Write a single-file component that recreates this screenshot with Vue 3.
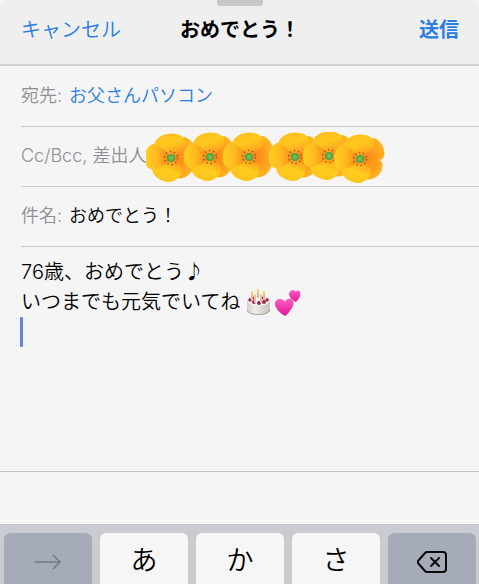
<script setup>
import { ref } from 'vue'

const to = ref('お父さんパソコン')
const subject = ref('おめでとう！')
const message = ref('76歳、おめでとう♪\nいつまでも元気でいてね')
const kana = ['あ', 'か', 'さ']
const flowers = [
  { x: 27, y: 26 },
  { x: 66, y: 25 },
  { x: 105, y: 25 },
  { x: 151, y: 25 },
  { x: 185, y: 24 },
  { x: 216, y: 27 }
]
const candles = [
  { x: 6, y: 6 },
  { x: 12, y: 4 },
  { x: 18, y: 6 },
  { x: 9, y: 9 },
  { x: 15, y: 9 }
]

function addKana(k) {
  message.value += k
}
function removeLast() {
  message.value = message.value.slice(0, -1)
}
</script>

<template>
  <div class="page">
    <form class="mail" @submit.prevent>
      <header class="bar">
        <span class="grabber"></span>
        <button type="button" class="cancel">キャンセル</button>
        <h1>{{ subject }}</h1>
        <button type="submit" class="send">送信</button>
      </header>

      <div class="fields">
        <div class="field">
          <label for="to">宛先:</label>
          <input id="to" v-model="to" type="text" class="address">
        </div>
        <div class="field">
          <button type="button" class="cc">Cc/Bcc, 差出人</button>
          <svg class="flowers" width="242" height="52" viewBox="2 0 242 52" aria-hidden="true">
            <defs>
              <linearGradient id="petal-top" x1="0" y1="0" x2="0.4" y2="1">
                <stop offset="0" stop-color="#ffbc20" />
                <stop offset="0.5" stop-color="#ffc81e" />
                <stop offset="0.8" stop-color="#ffab20" />
                <stop offset="1" stop-color="#fa8420" />
              </linearGradient>
              <linearGradient id="petal-bottom" x1="0.1" y1="1" x2="0.6" y2="0">
                <stop offset="0" stop-color="#ffc31e" />
                <stop offset="0.55" stop-color="#ffcb1e" />
                <stop offset="0.8" stop-color="#ffad1c" />
                <stop offset="1" stop-color="#fb831a" />
              </linearGradient>
              <radialGradient id="petal-back" gradientUnits="userSpaceOnUse" cx="2" cy="0" r="26">
                <stop offset="0" stop-color="#fb7d14" />
                <stop offset="0.5" stop-color="#ff9a1c" />
                <stop offset="1" stop-color="#ffba22" />
              </radialGradient>
              <linearGradient id="petal-side" x1="0" x2="1">
                <stop offset="0" stop-color="#ffce22" />
                <stop offset="0.45" stop-color="#ffba1e" />
                <stop offset="1" stop-color="#f87a1c" />
              </linearGradient>
              <radialGradient id="seed">
                <stop offset="0" stop-color="#80c858" />
                <stop offset="1" stop-color="#459f40" />
              </radialGradient>
            </defs>
            <g v-for="(f, i) in flowers" :key="i" :transform="`translate(${f.x} ${f.y})`">
              <path fill="url(#petal-back)" d="M0 0C3-12 7-21 14-21C21-19 26-9 24-3C23 0 21 1 19 1C23 2 23 6 22 10C20 17 12 22 6 20C2 16 0 8 0 0Z" />
              <path fill="url(#petal-top)" d="M0 1C-9-2-17-8-17-14C-14-22-4-26 5-24C12-23 16-18 14-11C12-5 7-1 0 1Z" />
              <path fill="url(#petal-bottom)" d="M0-1C9 3 14 12 9 18C5 23 1 24-3 24C-11 23-19 18-19 10C-18 4-9 1 0-1Z" />
              <path fill="url(#petal-side)" d="M0 0C-4-5-12-14-18-14C-24-12-27-5-26 2C-26 8-22 12-18 11C-11 10-4 5 0 0Z" />
              <circle r="6.500" fill="none" stroke="#a0520f" stroke-width="1.400" stroke-dasharray="1.400 2.700" />
              <circle r="4" fill="url(#seed)" />
            </g>
          </svg>
        </div>
        <div class="field">
          <label for="subject">件名:</label>
          <input id="subject" v-model="subject" type="text">
        </div>
      </div>

      <div class="body">
        <textarea v-model="message" rows="3" aria-label="本文" spellcheck="false"></textarea>
        <svg class="emoji" width="56" height="30" viewBox="0 0 56 30" aria-hidden="true">
          <defs>
            <linearGradient id="cake" x1="0" x2="1">
              <stop offset="0" stop-color="#d3cec8" />
              <stop offset="0.35" stop-color="#f1eeea" />
              <stop offset="1" stop-color="#c5bfb9" />
            </linearGradient>
            <linearGradient id="heart" x1="0" y1="0" x2="0" y2="1">
              <stop offset="0" stop-color="#ff5fc0" />
              <stop offset="1" stop-color="#e3149b" />
            </linearGradient>
          </defs>
          <path fill="url(#cake)" d="M1 12C1 8 6 7 12 7S24 8 24 12V21C24 24 19 26 12 26S1 24 1 21Z" />
          <ellipse cx="12.500" cy="12" rx="11" ry="4.500" fill="#faf7f2" />
          <path fill="none" stroke="#aaa199" d="M1 21C2 24 6 25.500 12 25.500S23 24 24 21" />
          <g fill="#98274c">
            <circle cx="4" cy="11" r="1.700" />
            <circle cx="8" cy="13" r="2" />
            <circle cx="13" cy="14" r="2" />
            <circle cx="18" cy="13" r="2" />
            <circle cx="21" cy="11" r="1.700" />
            <circle cx="7" cy="9" r="1.500" />
            <circle cx="16" cy="9" r="1.500" />
          </g>
          <g v-for="(c, i) in candles" :key="i" :transform="`translate(${c.x} ${c.y})`">
            <rect x="-1" y="-1" width="2" height="6" fill="#e9b5b0" />
            <ellipse cy="-2" rx="1.200" ry="2" fill="#f5d068" />
          </g>
          <path fill="url(#heart)" d="M39 27C34 24 29 19 29 15C29 12 31 10 34 10C36 10 38 11 39 13C40 10 43 9 45 10C48 11 48 14 47 17C45 21 42 25 39 27Z" />
          <path fill="url(#heart)" d="M50 13C46 11 43 8 43 5C43 3 45 1 47 1C48 1 49 2 49.500 3C51 1 53 1 54 3C55 7 53 10 50 13Z" />
        </svg>
        <span class="caret"></span>
      </div>
    </form>

    <div class="suggestions"></div>

    <div class="keyboard">
      <button type="button" class="key dark" aria-label="次へ">
        <svg width="26" height="16" viewBox="0 0 26 16" fill="none" stroke="#747982" stroke-width="1.500">
          <path d="M0 8H25M18 1L25 8L18 15" />
        </svg>
      </button>
      <button v-for="k in kana" :key="k" type="button" class="key" @click="addKana(k)">{{ k }}</button>
      <button type="button" class="key dark" aria-label="削除" @click="removeLast">
        <svg width="30" height="22" viewBox="0 0 30 22" fill="none" stroke="#0a0a0c" stroke-width="2" stroke-linejoin="round" stroke-linecap="round">
          <path d="M10 1H26Q29 1 29 4V18Q29 21 26 21H10Q9 21 8 20L1 12Q0 11 1 10L8 2Q9 1 10 1Z" />
          <path d="M14 7L22 15M22 7L14 15" />
        </svg>
      </button>
    </div>
  </div>
</template>

<style>
body {
  margin: 0;
  background: #f5f5f5;
}
</style>

<style scoped>
* {
  box-sizing: border-box;
}
.page {
  min-height: 100vh;
  display: flex;
  flex-direction: column;
  background: #f5f5f5;
  color: #000;
  font-family: Inter, "Noto Sans CJK JP", sans-serif;
  font-weight: 350;
}
button,
input,
textarea {
  font: inherit;
  color: inherit;
  background: none;
  border: none;
  border-radius: 0;
  padding: 0;
  margin: 0;
  outline: none;
}
button {
  cursor: pointer;
}
.mail {
  flex: 1;
  display: flex;
  flex-direction: column;
}
.bar {
  position: relative;
  display: grid;
  grid-template-columns: 1fr auto 1fr;
  align-items: center;
  height: 66px;
  padding: 0 20px 8px 21px;
  background: #efefef;
  border-bottom: 2px solid #d2d2d2;
  border-radius: 8px 8px 0 0;
  font-size: 20px;
}
.grabber {
  position: absolute;
  top: 0;
  left: 50%;
  width: 46px;
  height: 6px;
  margin-left: -23px;
  background: #c8c8ca;
  border-radius: 0 0 3px 3px;
}
h1 {
  margin: 0;
  font-size: 20px;
  font-weight: 700;
}
.cancel,
.send {
  color: #2a7de1;
}
.cancel {
  justify-self: start;
}
.send {
  justify-self: end;
  font-weight: 700;
}
.fields {
  padding: 1px 0 0 21px;
  font-size: 18px;
}
.field {
  display: flex;
  align-items: center;
  height: 60px;
  padding-bottom: 6px;
  border-bottom: 1px solid #cbcbcb;
}
label,
.cc {
  color: #8e8e93;
  white-space: nowrap;
}
label {
  margin-right: 7px;
}
input {
  flex: 1;
  min-width: 0;
}
.address {
  color: #2a7de1;
}
.flowers {
  flex: none;
  margin-top: 8px;
}
.body {
  position: relative;
  flex: 1;
  padding: 10px 20px 8px 21px;
}
textarea {
  display: block;
  width: 100%;
  font-size: 20px;
  line-height: 30px;
  resize: none;
  overflow: hidden;
}
.emoji {
  position: absolute;
  top: 42px;
  left: 246px;
}
.caret {
  position: absolute;
  top: 70px;
  left: 20px;
  width: 3px;
  height: 30px;
  background: #6684dc;
  border-radius: 1px;
}
.suggestions {
  height: 53px;
  border-top: 1px solid #c4c4c6;
}
.keyboard {
  display: flex;
  gap: 8px;
  padding: 8px 3px 0 4px;
  background: #cbccd2;
  border-top: 1px solid #c6c6ca;
}
.key {
  flex: 1;
  display: flex;
  align-items: center;
  justify-content: center;
  height: 51px;
  padding-top: 7px;
  background: #f6f6f6;
  border-radius: 6px 6px 0 0;
  font-size: 27px;
  line-height: 36px;
}
.key:not(.dark) {
  padding-top: 4px;
}
.dark {
  background: #a5acb8;
}
</style>
